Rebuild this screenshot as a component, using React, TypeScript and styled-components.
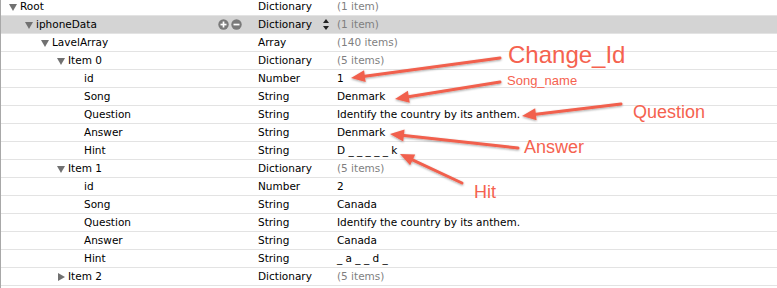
import styled, { createGlobalStyle } from 'styled-components'

interface Node {
    key: string
    type: string
    value: string
    depth: number
    open?: boolean
    selected?: boolean
}

const rows: Node[] = [
    { key: 'Root', type: 'Dictionary', value: '(1 item)', depth: 0, open: true },
    { key: 'iphoneData', type: 'Dictionary', value: '(1 item)', depth: 1, open: true, selected: true },
    { key: 'LavelArray', type: 'Array', value: '(140 items)', depth: 2, open: true },
    { key: 'Item 0', type: 'Dictionary', value: '(5 items)', depth: 3, open: true },
    { key: 'id', type: 'Number', value: '1', depth: 4 },
    { key: 'Song', type: 'String', value: 'Denmark', depth: 4 },
    { key: 'Question', type: 'String', value: 'Identify the country by its anthem.', depth: 4 },
    { key: 'Answer', type: 'String', value: 'Denmark', depth: 4 },
    { key: 'Hint', type: 'String', value: 'D _ _ _ _ _ k', depth: 4 },
    { key: 'Item 1', type: 'Dictionary', value: '(5 items)', depth: 3, open: true },
    { key: 'id', type: 'Number', value: '2', depth: 4 },
    { key: 'Song', type: 'String', value: 'Canada', depth: 4 },
    { key: 'Question', type: 'String', value: 'Identify the country by its anthem.', depth: 4 },
    { key: 'Answer', type: 'String', value: 'Canada', depth: 4 },
    { key: 'Hint', type: 'String', value: '_ a _ _ d _', depth: 4 },
    { key: 'Item 2', type: 'Dictionary', value: '(5 items)', depth: 3, open: false },
    { key: '', type: '', value: '', depth: 4 },
]

// arrows: tail -> tip
const arrows = [
    { x1: 500, y1: 58, x2: 351, y2: 78 },
    { x1: 500, y1: 82, x2: 395, y2: 99 },
    { x1: 621, y1: 104, x2: 522, y2: 116 },
    { x1: 518, y1: 148, x2: 390, y2: 134 },
    { x1: 462, y1: 183, x2: 400, y2: 154 },
]

const callouts = [
    { text: 'Change_Id', x: 508, y: 43, size: 24 },
    { text: 'Song_name', x: 507, y: 74, size: 13 },
    { text: 'Question', x: 633, y: 103, size: 18 },
    { text: 'Answer', x: 524, y: 138, size: 18 },
    { text: 'Hit', x: 474, y: 183, size: 18 },
]

const isContainer = (n: Node) => n.open !== undefined

function Arrow({ x1, y1, x2, y2 }: { x1: number; y1: number; x2: number; y2: number }) {
    const len = Math.hypot(x2 - x1, y2 - y1)
    const ux = (x2 - x1) / len
    const uy = (y2 - y1) / len
    const bx = x2 - ux * 14
    const by = y2 - uy * 14
    const nx = -uy * 6
    const ny = ux * 6
    return (
        <g>
            <line x1={x1} y1={y1} x2={bx + ux * 2} y2={by + uy * 2} />
            <polygon points={`${x2},${y2} ${bx + nx},${by + ny} ${bx - nx},${by - ny}`} />
        </g>
    )
}

function Disclosure({ open }: { open: boolean }) {
    return (
        <svg width="8" height="8" viewBox="0 0 8 8">
            {open ? <polygon points="0,1 8,1 4,8" /> : <polygon points="1,0 8,4 1,8" />}
        </svg>
    )
}

function RoundButton({ minus }: { minus?: boolean }) {
    return (
        <svg width="11" height="11" viewBox="0 0 11 11">
            <circle cx="5.5" cy="5.5" r="5.2" fill="#7a7a7a" />
            <rect x="2.5" y="4.7" width="6" height="1.7" fill="#fff" />
            {!minus && <rect x="4.65" y="2.5" width="1.7" height="6" fill="#fff" />}
        </svg>
    )
}

export default function App() {
    return (
        <Page>
            <GlobalStyle />
            <Outline>
                {rows.map((n, i) => (
                    <Row key={i} $selected={n.selected}>
                        <KeyCell $depth={n.depth}>
                            <Toggle>{isContainer(n) && <Disclosure open={!!n.open} />}</Toggle>
                            <span>{n.key}</span>
                            {n.selected && (
                                <Controls>
                                    <RoundButton />
                                    <RoundButton minus />
                                </Controls>
                            )}
                        </KeyCell>
                        <TypeCell>
                            <span>{n.type}</span>
                            {n.selected && (
                                <svg width="6" height="11" viewBox="0 0 6 11">
                                    <polygon points="3,0 6,4 0,4" fill="#222" />
                                    <polygon points="0,7 6,7 3,11" fill="#222" />
                                </svg>
                            )}
                        </TypeCell>
                        <ValueCell $muted={isContainer(n)}>{n.value}</ValueCell>
                    </Row>
                ))}
            </Outline>
            <Overlay>
                <ArrowLayer width="777" height="288">
                    <defs>
                        <filter id="shade" x="-10%" y="-50%" width="120%" height="200%">
                            <feDropShadow dx="0" dy="1" stdDeviation="0.8" floodOpacity="0.35" />
                        </filter>
                    </defs>
                    <g filter="url(#shade)">
                        {arrows.map((a, i) => (
                            <Arrow key={i} {...a} />
                        ))}
                    </g>
                </ArrowLayer>
                {callouts.map((c) => (
                    <Callout key={c.text} $x={c.x} $y={c.y} $size={c.size}>
                        {c.text}
                    </Callout>
                ))}
            </Overlay>
        </Page>
    )
}

const GlobalStyle = createGlobalStyle`
    body {
        margin: 0;
        background: #fff;
    }
`

const Page = styled.div`
    position: relative;
    width: 777px;
    height: 288px;
    overflow: hidden;
    background: #fff;
    font-family: "DejaVu Sans", "Lucida Grande", sans-serif;
    font-size: 10.5px;
    color: #000;
`

const Outline = styled.div`
    margin-top: -2px;
    border-left: 1px solid #a8a8a8;
`

const Row = styled.div<{ $selected?: boolean }>`
    display: grid;
    grid-template-columns: 257px 79px 1fr;
    height: 18px;
    box-sizing: border-box;
    border-bottom: 1px solid #e3e3e3;
    background: ${(p) => (p.$selected ? '#d4d4d4' : '#fff')};
    line-height: 17px;
    white-space: nowrap;
`

const KeyCell = styled.div<{ $depth: number }>`
    display: flex;
    align-items: center;
    padding-left: ${(p) => 8 + p.$depth * 16}px;
`

const Toggle = styled.span`
    display: flex;
    width: 8px;
    margin-right: 3px;
    svg {
        fill: #717171;
    }
`

const Controls = styled.span`
    display: flex;
    gap: 2px;
    margin-left: auto;
    padding-right: 16px;
`

const TypeCell = styled.div`
    display: flex;
    align-items: center;
    justify-content: space-between;
    padding-right: 8px;
`

const ValueCell = styled.div<{ $muted?: boolean }>`
    color: ${(p) => (p.$muted ? '#7f7f7f' : '#000')};
`

const Overlay = styled.div`
    position: absolute;
    inset: 0;
    pointer-events: none;
`

const ArrowLayer = styled.svg`
    position: absolute;
    left: 0;
    top: 0;
    line {
        stroke: #f1604d;
        stroke-width: 3;
        stroke-linecap: round;
    }
    polygon {
        fill: #f1604d;
    }
`

const Callout = styled.span<{ $x: number; $y: number; $size: number }>`
    position: absolute;
    left: ${(p) => p.$x}px;
    top: ${(p) => p.$y}px;
    font-family: "Liberation Sans", Arial, sans-serif;
    font-size: ${(p) => p.$size}px;
    line-height: 1;
    color: #f5624f;
    white-space: nowrap;
`
